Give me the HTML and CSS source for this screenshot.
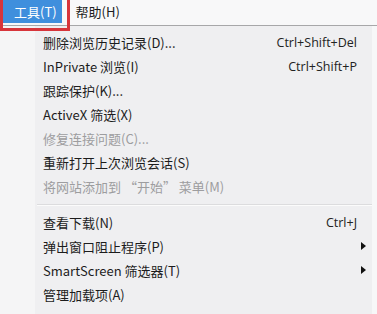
FILE: index.html
```html
<!DOCTYPE html>
<html>
<head>
<meta charset="utf-8">
<link rel="stylesheet" href="styles.css">
</head>
<body>
<div class="menubar">
  <span class="top-item active">工具(T)</span>
  <span class="top-item">帮助(H)</span>
  <div class="redbox"></div>
</div>
<div class="area">
  <div class="gutter"></div>
  <ul class="menu">
    <li class="item"><span class="label">删除浏览历史记录(D)...</span><span class="key">Ctrl+Shift+Del</span></li>
    <li class="item"><span class="label">InPrivate 浏览(I)</span><span class="key">Ctrl+Shift+P</span></li>
    <li class="item"><span class="label">跟踪保护(K)...</span></li>
    <li class="item"><span class="label">ActiveX 筛选(X)</span></li>
    <li class="item disabled"><span class="label">修复连接问题(C)...</span></li>
    <li class="item"><span class="label">重新打开上次浏览会话(S)</span></li>
    <li class="item disabled"><span class="label">将网站添加到 “开始” 菜单(M)</span></li>
    <li class="sep"></li>
    <li class="item"><span class="label">查看下载(N)</span><span class="key">Ctrl+J</span></li>
    <li class="item"><span class="label">弹出窗口阻止程序(P)</span><span class="arrow"></span></li>
    <li class="item"><span class="label">SmartScreen 筛选器(T)</span><span class="arrow"></span></li>
    <li class="item"><span class="label">管理加载项(A)</span></li>
  </ul>
  <div class="rstrip"></div>
</div>
</body>
</html>
```
FILE: styles.css
```css
html, body {
  margin: 0;
  padding: 0;
}
body {
  width: 377px;
  height: 314px;
  overflow: hidden;
  background: #f6f6f6;
  font-family: "Noto Sans CJK SC", "Noto Sans", sans-serif;
  font-size: 13px;
  color: #1c1c1c;
}
.menubar {
  position: relative;
  height: 25px;
  background: #f8f8f9;
  border-bottom: 1px solid #a7a7a9;
  display: flex;
  align-items: flex-start;
  padding-left: 3px;
}
.top-item {
  height: 23px;
  line-height: 23px;
  white-space: nowrap;
}
.top-item.active {
  background: #3f8fdd;
  color: #ffffff;
  padding: 0 5px 0 11px;
}
.top-item + .top-item {
  margin-left: 14px;
}
.redbox {
  position: absolute;
  left: 0;
  top: -3px;
  width: 70px;
  height: 34px;
  box-sizing: border-box;
  border: 3px solid #d7353b;
}
.area {
  display: flex;
  height: 288px;
}
.gutter {
  width: 35px;
  background: #f5f5f6;
}
.rstrip {
  width: 5px;
  background: #f7f7f8;
}
.menu {
  flex: 1;
  list-style: none;
  margin: 0;
  padding: 4px 15px 0 0;
  background: #efeff1;
}
.item {
  display: flex;
  align-items: center;
  height: 24px;
  padding-left: 8px;
}
.label {
  flex: 1;
  white-space: nowrap;
}
.key {
  font-family: "Open Sans", "Noto Sans", sans-serif;
  font-size: 12.5px;
  color: #222;
}
.disabled {
  color: #9d9d9f;
}
.sep {
  height: 12px;
  margin-left: 2px;
  margin-right: -15px;
  position: relative;
}
.sep::after {
  content: "";
  position: absolute;
  left: 0;
  right: 0;
  top: 6px;
  border-top: 1px solid #dcdcde;
  border-bottom: 1px solid #fbfbfb;
}
.arrow {
  width: 0;
  height: 0;
  border-top: 4px solid transparent;
  border-bottom: 4px solid transparent;
  border-left: 5px solid #111;
  margin-right: -9px;
}
```
